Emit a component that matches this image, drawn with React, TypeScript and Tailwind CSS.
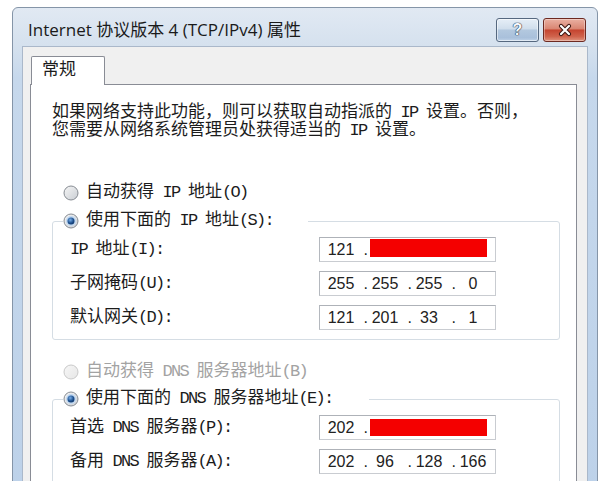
import { useId } from "react";

const body = "font-['Liberation_Mono','Noto_Sans_CJK_SC',monospace] text-[17px] text-[#1c1c1c]";

// Latin runs are set half-width next to the full-width Chinese glyphs.
function Mixed({ text }: { text: string }) {
  const runs = text.split(/([\x20-\x7e]+)/).filter((r) => r.length > 0);
  return (
    <>
      {runs.map((r, i) =>
        /^[\x20-\x7e]+$/.test(r) ? (
          <span key={i} className="tracking-[-1.7px]">
            {r}
          </span>
        ) : (
          <span key={i}>{r}</span>
        )
      )}
    </>
  );
}

function Radio({ checked, disabled }: { checked?: boolean; disabled?: boolean }) {
  const id = useId().replace(/:/g, "");
  return (
    <svg width="16" height="16" viewBox="0 0 16 16" className="shrink-0">
      <defs>
        <linearGradient id={`${id}o`} x1="0" y1="0" x2="1" y2="1">
          <stop offset="0" stopColor={disabled ? "#f7f7f7" : "#f6f6f6"} />
          <stop offset="1" stopColor={disabled ? "#e6e6e6" : "#c9cdd3"} />
        </linearGradient>
        <radialGradient id={`${id}d`} cx="0.4" cy="0.35" r="0.75">
          <stop offset="0" stopColor="#78aee6" />
          <stop offset="0.6" stopColor="#1d4f8e" />
          <stop offset="1" stopColor="#0d2f5c" />
        </radialGradient>
      </defs>
      <circle
        cx="8"
        cy="8"
        r="7"
        fill={`url(#${id}o)`}
        stroke={disabled ? "#c9c9c9" : "#878c93"}
      />
      {checked && (
        <>
          <circle cx="8" cy="8" r="5" fill="#bfd8f2" />
          <circle cx="8" cy="8" r="3.5" fill={`url(#${id}d)`} />
        </>
      )}
    </svg>
  );
}

function Choice({
  label,
  checked,
  disabled,
}: {
  label: string;
  checked?: boolean;
  disabled?: boolean;
}) {
  return (
    <div className="flex h-[18px] items-center">
      <Radio checked={checked} disabled={disabled} />
      <span
        className={`ml-[7px] whitespace-nowrap leading-[18px] ${
          disabled ? "text-[#a3a3a3]" : ""
        }`}
      >
        <Mixed text={label} />
      </span>
    </div>
  );
}

function IpBox({
  parts,
  masked,
  tall,
}: {
  parts: string[];
  masked?: boolean;
  tall?: boolean;
}) {
  return (
    <div className="flex h-[25px] w-[177px] items-center border border-[#c9ccd1] border-l-[#b4b8be] border-t-[#aeb2b8] bg-white pl-[4px] font-['Liberation_Sans',sans-serif] text-[16px] text-[#222]">
      {masked ? (
        <>
          <span className="w-[34px] text-center">{parts[0]}</span>
          <span className="w-[10px] text-right">.</span>
          <div
            className={`ml-[2px] w-[117px] self-start bg-[#f40000] ${
              tall ? "mt-[1px] h-[18px]" : "mt-[3px] h-[17px]"
            }`}
          />
        </>
      ) : (
        parts.map((p, i) => (
          <div key={i} className="flex">
            <span className="w-[34px] text-center">{p}</span>
            {i < 3 && <span className="w-[10px] text-right">.</span>}
          </div>
        ))
      )}
    </div>
  );
}

function Group({
  legend,
  legendWidth,
  rows,
}: {
  legend: string;
  legendWidth: string;
  rows: { label: string; parts: string[]; masked?: boolean; tall?: boolean }[];
}) {
  return (
    <fieldset className="w-[508px] rounded-[3px] border border-[#d5dde4] pb-[9px]">
      <legend className={`ml-[10px] ${legendWidth}`}>
        <Choice label={legend} checked />
      </legend>
      <div className="grid grid-cols-[249px_177px] items-center gap-y-[9px] pl-[17px] pt-[7px]">
        {rows.map((r) => (
          <div key={r.label} className="contents">
            <span className="whitespace-nowrap leading-[18px]">
              <Mixed text={r.label} />
            </span>
            <IpBox parts={r.parts} masked={r.masked} tall={r.tall} />
          </div>
        ))}
      </div>
    </fieldset>
  );
}

function HelpButton() {
  return (
    <div className="flex h-[24px] w-[43px] items-center justify-center rounded-[3px] border border-[#56687f] bg-[linear-gradient(to_bottom,#e6eef7_0%,#d0deec_45%,#b3c8df_50%,#a9c0db_85%,#c0d3e8_100%)] shadow-[inset_0_0_0_1px_rgba(255,255,255,0.55)]">
      <span className="font-['Liberation_Sans',sans-serif] text-[16px] font-bold leading-none text-[#f6f8fb] [text-shadow:0_0_1px_#24364f,0_0_1px_#24364f,0_0_1px_#24364f]">
        ?
      </span>
    </div>
  );
}

function CloseButton() {
  return (
    <div className="flex h-[24px] w-[43px] items-center justify-center rounded-[3px] border border-[#6d2a22] bg-[linear-gradient(to_bottom,#eab0a2_0%,#d98572_45%,#c5442f_50%,#d0644d_80%,#e0947e_100%)] shadow-[inset_0_0_0_1px_rgba(255,255,255,0.35)]">
      <svg width="18" height="14" viewBox="0 0 18 14">
        <path d="M5 3 L13 11 M13 3 L5 11" stroke="#3b1510" strokeWidth="4.2" strokeLinecap="round" />
        <path d="M5 3 L13 11 M13 3 L5 11" stroke="#ffffff" strokeWidth="2.2" strokeLinecap="round" />
      </svg>
    </div>
  );
}

export default function App() {
  return (
    <div className="relative h-[481px] w-[598px] overflow-hidden bg-white">
      <div className="ml-[12px] mt-[7px] flex h-[520px] w-[586px] flex-col rounded-t-[6px] border border-[#8595a8] bg-[linear-gradient(to_bottom,#e1e9f3_0px,#d5e1ee_38px,#c6d8ec_70px,#bcd1e9_100%)]">
        {/* caption */}
        <div className="flex h-[38px] shrink-0 items-start pl-[15px] pr-[11px] pt-[10px]">
          <span className="mt-[2px] flex-1 whitespace-nowrap font-['Open_Sans','Noto_Sans_CJK_SC',sans-serif] text-[17px] leading-[20px] text-[#1a1a1a]">
            Internet 协议版本 4 (TCP/IPv4) 属性
          </span>
          <div className="flex gap-[4px]">
            <HelpButton />
            <CloseButton />
          </div>
        </div>

        {/* client area */}
        <div className="ml-[9px] w-[566px] flex-1 border-x border-t border-[#aab8ca] bg-[#f0f0f0] pl-[7px] pt-[9px]">
          <div
            className={`relative z-10 ml-[1px] flex h-[29px] w-[74px] items-center rounded-t-[2px] border-x border-t border-[#898c95] bg-white pl-[10px] ${body}`}
          >
            常规
          </div>
          <div
            className={`-mt-px h-[420px] w-[547px] border border-[#898c95] bg-white px-[21px] pt-[19px] ${body}`}
          >
            <p className="whitespace-nowrap leading-[18px]">
              <Mixed text="如果网络支持此功能，则可以获取自动指派的 IP 设置。否则，" />
              <br />
              <Mixed text="您需要从网络系统管理员处获得适当的 IP 设置。" />
            </p>

            <div className="mt-[44px] pl-[11px]">
              <Choice label="自动获得 IP 地址(O)" />
            </div>
            <div className="mt-[10px]">
              <Group
                legend="使用下面的 IP 地址(S):"
                legendWidth="w-[245px]"
                rows={[
                  { label: "IP 地址(I):", parts: ["121"], masked: true, tall: true },
                  { label: "子网掩码(U):", parts: ["255", "255", "255", "0"] },
                  { label: "默认网关(D):", parts: ["121", "201", "33", "1"] },
                ]}
              />
            </div>

            <div className="mt-[23px] pl-[11px]">
              <Choice label="自动获得 DNS 服务器地址(B)" disabled />
            </div>
            <div className="mt-[9px]">
              <Group
                legend="使用下面的 DNS 服务器地址(E):"
                legendWidth="w-[306px]"
                rows={[
                  { label: "首选 DNS 服务器(P):", parts: ["202"], masked: true },
                  { label: "备用 DNS 服务器(A):", parts: ["202", "96", "128", "166"] },
                ]}
              />
            </div>
          </div>
        </div>
      </div>
    </div>
  );
}
